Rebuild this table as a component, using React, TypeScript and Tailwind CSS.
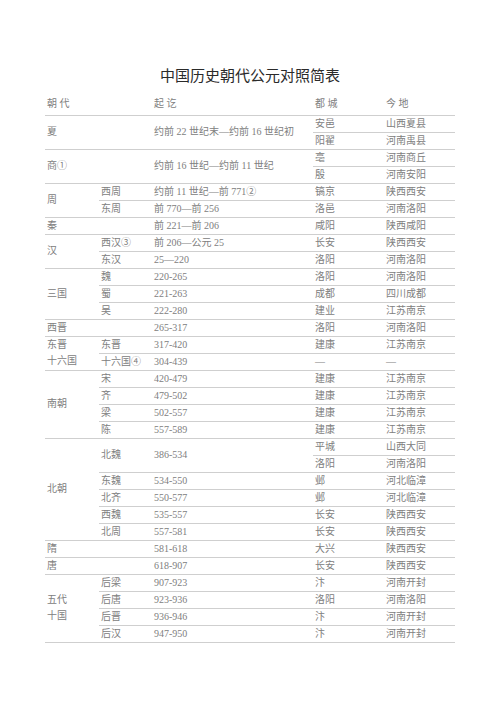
import React from 'react';

const line = 'border-b border-[#cfcfcf]';
const cell = `p-0 pl-[2px] align-middle text-left font-normal ${line}`;

type Row = React.ReactNode;

function App() {
  const rows: Row[] = [
    // 夏
    <tr key="xia1" className="h-[16px]">
      <td rowSpan={2} className={cell}>夏</td>
      <td rowSpan={2} className={cell}></td>
      <td rowSpan={2} className={cell}>约前 22 世纪末—约前 16 世纪初</td>
      <td className={cell}>安邑</td>
      <td className={cell}>山西夏县</td>
    </tr>,
    <tr key="xia2" className="h-[16px]">
      <td className={cell}>阳翟</td>
      <td className={cell}>河南禹县</td>
    </tr>,
    // 商
    <tr key="shang1" className="h-[16px]">
      <td rowSpan={2} className={cell}>商①</td>
      <td rowSpan={2} className={cell}></td>
      <td rowSpan={2} className={cell}>约前 16 世纪—约前 11 世纪</td>
      <td className={cell}>亳</td>
      <td className={cell}>河南商丘</td>
    </tr>,
    <tr key="shang2" className="h-[16px]">
      <td className={cell}>殷</td>
      <td className={cell}>河南安阳</td>
    </tr>,
    // 周
    <tr key="zhou1" className="h-[16px]">
      <td rowSpan={2} className={cell}>周</td>
      <td className={cell}>西周</td>
      <td className={cell}>约前 11 世纪—前 771②</td>
      <td className={cell}>镐京</td>
      <td className={cell}>陕西西安</td>
    </tr>,
    <tr key="zhou2" className="h-[16px]">
      <td className={cell}>东周</td>
      <td className={cell}>前 770—前 256</td>
      <td className={cell}>洛邑</td>
      <td className={cell}>河南洛阳</td>
    </tr>,
    <tr key="qin" className="h-[16px]">
      <td className={cell}>秦</td>
      <td className={cell}></td>
      <td className={cell}>前 221—前 206</td>
      <td className={cell}>咸阳</td>
      <td className={cell}>陕西咸阳</td>
    </tr>,
    // 汉
    <tr key="han1" className="h-[16px]">
      <td rowSpan={2} className={cell}>汉</td>
      <td className={cell}>西汉③</td>
      <td className={cell}>前 206—公元 25</td>
      <td className={cell}>长安</td>
      <td className={cell}>陕西西安</td>
    </tr>,
    <tr key="han2" className="h-[16px]">
      <td className={cell}>东汉</td>
      <td className={cell}>25—220</td>
      <td className={cell}>洛阳</td>
      <td className={cell}>河南洛阳</td>
    </tr>,
  ];

  const simple = (
    key: string,
    sub: string,
    years: string,
    capital: string,
    place: string,
    first?: React.ReactNode
  ) => (
    <tr key={key} className="h-[16px]">
      {first}
      <td className={cell}>{sub}</td>
      <td className={cell}>{years}</td>
      <td className={cell}>{capital}</td>
      <td className={cell}>{place}</td>
    </tr>
  );

  rows.push(
    simple('wei', '魏', '220-265', '洛阳', '河南洛阳', <td rowSpan={3} className={cell}>三国</td>),
    simple('shu', '蜀', '221-263', '成都', '四川成都'),
    simple('wu', '吴', '222-280', '建业', '江苏南京'),
    simple('xijin', '', '265-317', '洛阳', '河南洛阳', <td className={cell}>西晋</td>),
    simple(
      'dongjin',
      '东晋',
      '317-420',
      '建康',
      '江苏南京',
      <td rowSpan={2} className={cell}>
        东晋
        <br />
        十六国
      </td>
    ),
    simple('16', '十六国④', '304-439', '—', '—'),
    simple('song', '宋', '420-479', '建康', '江苏南京', <td rowSpan={4} className={cell}>南朝</td>),
    simple('qi', '齐', '479-502', '建康', '江苏南京'),
    simple('liang', '梁', '502-557', '建康', '江苏南京'),
    simple('chen', '陈', '557-589', '建康', '江苏南京'),
    <tr key="beiwei1" className="h-[16px]">
      <td rowSpan={6} className={cell}>北朝</td>
      <td rowSpan={2} className={cell}>北魏</td>
      <td rowSpan={2} className={cell}>386-534</td>
      <td className={cell}>平城</td>
      <td className={cell}>山西大同</td>
    </tr>,
    <tr key="beiwei2" className="h-[16px]">
      <td className={cell}>洛阳</td>
      <td className={cell}>河南洛阳</td>
    </tr>,
    simple('dongwei', '东魏', '534-550', '邺', '河北临漳'),
    simple('beiqi', '北齐', '550-577', '邺', '河北临漳'),
    simple('xiwei', '西魏', '535-557', '长安', '陕西西安'),
    simple('beizhou', '北周', '557-581', '长安', '陕西西安'),
    simple('sui', '', '581-618', '大兴', '陕西西安', <td className={cell}>隋</td>),
    simple('tang', '', '618-907', '长安', '陕西西安', <td className={cell}>唐</td>),
    simple(
      'houliang',
      '后梁',
      '907-923',
      '汴',
      '河南开封',
      <td rowSpan={4} className={cell}>
        五代
        <br />
        十国
      </td>
    ),
    simple('houtang', '后唐', '923-936', '洛阳', '河南洛阳'),
    simple('houjin', '后晋', '936-946', '汴', '河南开封'),
    simple('houhan', '后汉', '947-950', '汴', '河南开封')
  );

  return (
    <div className="min-h-screen bg-white pt-[64px] font-['Liberation_Serif','Noto_Sans_CJK_SC',serif]">
      <h1 className="text-center text-[15px] leading-[22px] text-[#2a2a2a] font-normal font-['Noto_Sans_CJK_SC',sans-serif]">
        中国历史朝代公元对照简表
      </h1>
      <table className="mx-auto mt-[8px] w-[410px] table-fixed border-collapse text-[10px] leading-[16px] text-[#808080]">
        <colgroup>
          <col className="w-[54px]" />
          <col className="w-[53px]" />
          <col className="w-[161px]" />
          <col className="w-[71px]" />
          <col className="w-[71px]" />
        </colgroup>
        <thead>
          <tr className="h-[21px]">
            <th className={cell}>朝 代</th>
            <th className={cell}></th>
            <th className={cell}>起 讫</th>
            <th className={cell}>都 城</th>
            <th className={cell}>今 地</th>
          </tr>
        </thead>
        <tbody>{rows}</tbody>
      </table>
    </div>
  );
}

export default App;
